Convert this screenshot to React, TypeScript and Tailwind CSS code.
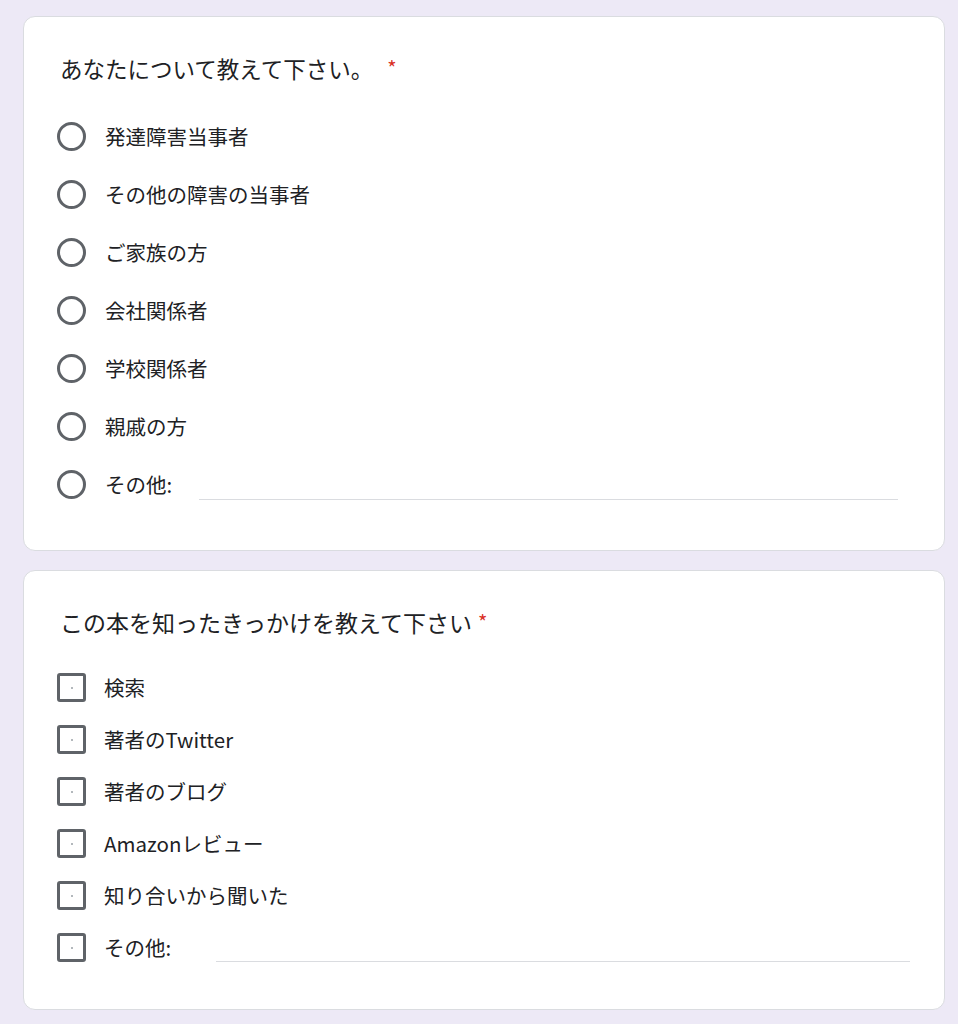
import React from "react";

const font = { fontFamily: '"Noto Sans CJK JP", "Noto Sans", sans-serif' };

function Radio() {
  return <div className="w-[29px] h-[29px] rounded-full border-[3px] border-[#5f6368] shrink-0" />;
}

function Check() {
  return (
    <div className="w-[29px] h-[29px] rounded-[3px] border-[3px] border-[#5f6368] shrink-0 flex items-center justify-center">
      <div className="w-[2px] h-[2px] bg-[#9aa0a6] rounded-full" />
    </div>
  );
}

export default function App() {
  const radios = ["発達障害当事者", "その他の障害の当事者", "ご家族の方", "会社関係者", "学校関係者", "親戚の方"];
  const checks = ["検索", "著者のTwitter", "著者のブログ", "Amazonレビュー", "知り合いから聞いた"];
  return (
    <div className="min-h-[1024px] bg-[#ede9f6] pt-[16px] pl-[23px] pr-[13px] flex flex-col gap-[19px] text-[#202124]" style={font}>
      <div className="bg-white rounded-[12px] border border-[#dadce0] h-[535px] pt-[37px] pl-[33px] pr-[46px]">
        <div className="text-[22.5px] leading-[28px] flex items-center pl-[3px]">
          <span>あなたについて教えて下さい。</span>
          <span className="text-[#d93025] ml-[14px] text-[20px]">*</span>
        </div>
        <div className="mt-[40px] flex flex-col">
          {radios.map((r) => (
            <div key={r} className="h-[58px] flex items-start">
              <Radio />
              <span className="ml-[19px] text-[20.5px] leading-[29px]">{r}</span>
            </div>
          ))}
          <div className="h-[29px] flex items-start">
            <Radio />
            <span className="ml-[19px] text-[20.5px] leading-[29px]">その他:</span>
            <div className="ml-[27px] flex-1 h-[30px] border-b border-[#dadce0]" />
          </div>
        </div>
      </div>
      <div className="bg-white rounded-[12px] border border-[#dadce0] h-[440px] pt-[37px] pl-[33px] pr-[34px]">
        <div className="text-[23px] leading-[28px] flex items-center pl-[3px]">
          <span>この本を知ったきっかけを教えて下さい</span>
          <span className="text-[#d93025] ml-[6px] text-[20px]">*</span>
        </div>
        <div className="mt-[37px] flex flex-col">
          {checks.map((c) => (
            <div key={c} className="h-[52px] flex items-start">
              <Check />
              <span className="ml-[18px] text-[20.5px] leading-[29px]">{c}</span>
            </div>
          ))}
          <div className="h-[29px] flex items-start">
            <Check />
            <span className="ml-[18px] text-[20.5px] leading-[29px]">その他:</span>
            <div className="ml-[45px] flex-1 h-[29px] border-b border-[#dadce0]" />
          </div>
        </div>
      </div>
    </div>
  );
}
